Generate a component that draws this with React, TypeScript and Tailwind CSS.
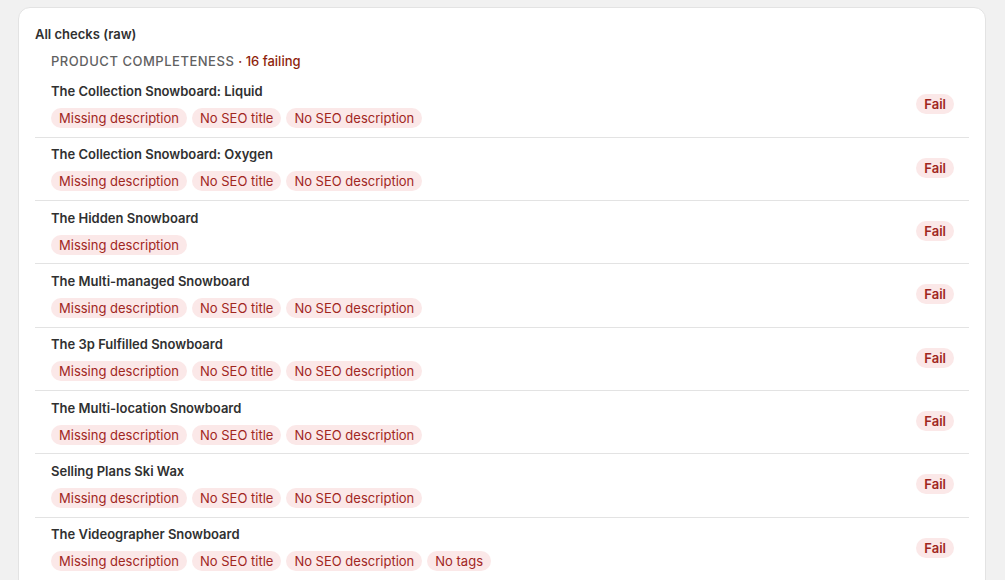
const rows: { title: string; issues: string[] }[] = [
  { title: "The Collection Snowboard: Liquid", issues: ["Missing description", "No SEO title", "No SEO description"] },
  { title: "The Collection Snowboard: Oxygen", issues: ["Missing description", "No SEO title", "No SEO description"] },
  { title: "The Hidden Snowboard", issues: ["Missing description"] },
  { title: "The Multi-managed Snowboard", issues: ["Missing description", "No SEO title", "No SEO description"] },
  { title: "The 3p Fulfilled Snowboard", issues: ["Missing description", "No SEO title", "No SEO description"] },
  { title: "The Multi-location Snowboard", issues: ["Missing description", "No SEO title", "No SEO description"] },
  { title: "Selling Plans Ski Wax", issues: ["Missing description", "No SEO title", "No SEO description"] },
  { title: "The Videographer Snowboard", issues: ["Missing description", "No SEO title", "No SEO description", "No tags"] },
  { title: "The Compare at Price Snowboard", issues: ["No SEO title", "No SEO description"] },
  { title: "The Inventory Not Tracked Snowboard", issues: ["No SEO title", "No SEO description"] },
];

function Chip({ children }: { children: string }) {
  return (
    <span className="inline-flex h-5 items-center rounded-full bg-[#fbe8e8] px-2 text-[13px] leading-5 text-[#a1261e]">
      {children}
    </span>
  );
}

export default function App() {
  return (
    <div
      className="min-h-screen bg-[#f1f1f1] pl-[18px] pr-[19px] pt-[7px] pb-5"
      style={{ fontFamily: "Inter, 'Noto Sans', sans-serif" }}
    >
      <div className="rounded-xl border border-[#e3e3e3] bg-white p-4">
        <h2 className="text-[13px] font-semibold leading-5 text-[#303030]">All checks (raw)</h2>

        <div className="mt-[7px] pl-4 text-[13px] font-medium leading-5 tracking-[0.04em] text-[#616161]">
          PRODUCT COMPLETENESS <span className="tracking-normal text-[#8e1f0b]">· 16 failing</span>
        </div>

        <div className="mt-[3.33px]">
          {rows.map((row, i) => (
            <div
              key={row.title}
              className={`flex items-center justify-between pl-4 pr-[15px] pt-[6.67px] pb-[8.67px] ${i > 0 ? "border-t border-[#e3e3e3]" : ""}`}
            >
              <div>
                <div className="text-[13px] font-semibold leading-5 text-[#303030]">{row.title}</div>
                <div className="mt-[7px] flex flex-wrap gap-[5px]">
                  {row.issues.map((issue) => (
                    <Chip key={issue}>{issue}</Chip>
                  ))}
                </div>
              </div>
              <span className="inline-flex h-5 items-center rounded-full bg-[#fbe8e8] px-2 text-[13px] font-semibold leading-5 text-[#a1261e]">
                Fail
              </span>
            </div>
          ))}
        </div>
      </div>
    </div>
  );
}
